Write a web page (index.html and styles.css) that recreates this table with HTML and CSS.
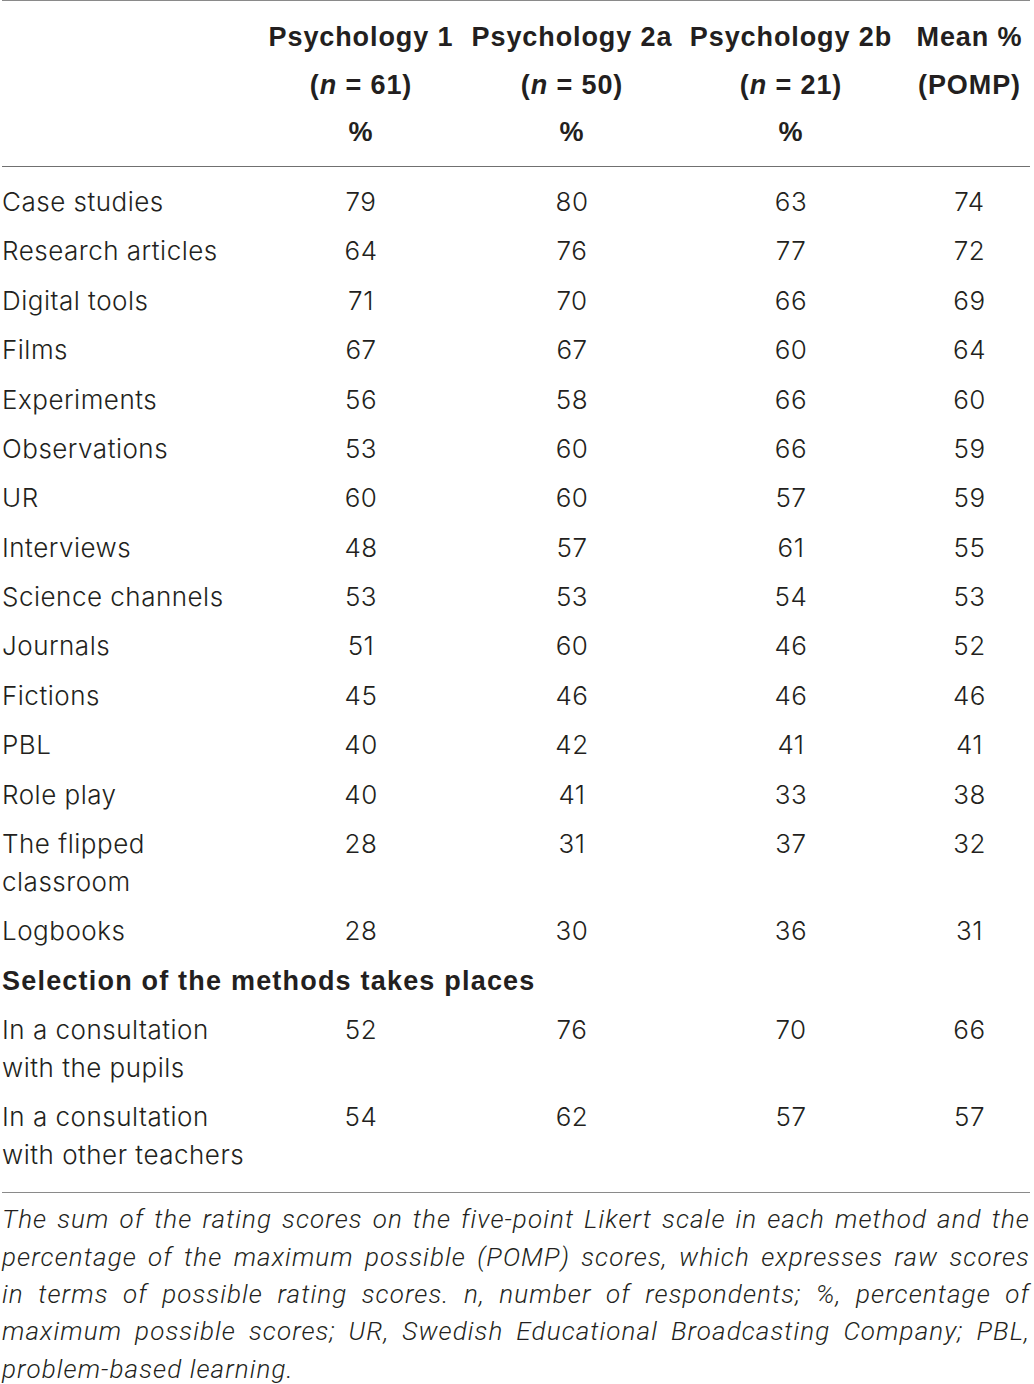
FILE: index.html
```html
<!DOCTYPE html>
<html lang="en">
<head>
<meta charset="utf-8">
<title>Table</title>
<link rel="stylesheet" href="styles.css">
</head>
<body>
<div class="wrap">
  <table class="data">
    <colgroup>
      <col class="c-label">
      <col class="c-p1">
      <col class="c-p2a">
      <col class="c-p2b">
      <col class="c-mean">
    </colgroup>
    <thead>
      <tr>
        <th></th>
        <th><span class="hl">Psychology 1</span><span class="hl">(<i>n</i> = 61)</span><span class="hl">%</span></th>
        <th><span class="hl">Psychology 2a</span><span class="hl">(<i>n</i> = 50)</span><span class="hl">%</span></th>
        <th><span class="hl">Psychology 2b</span><span class="hl">(<i>n</i> = 21)</span><span class="hl">%</span></th>
        <th><span class="hl">Mean %</span><span class="hl">(POMP)</span></th>
      </tr>
    </thead>
    <tbody>
      <tr class="first"><td>Case studies</td><td>79</td><td>80</td><td>63</td><td>74</td></tr>
      <tr><td>Research articles</td><td>64</td><td>76</td><td>77</td><td>72</td></tr>
      <tr><td>Digital tools</td><td>71</td><td>70</td><td>66</td><td>69</td></tr>
      <tr><td>Films</td><td>67</td><td>67</td><td>60</td><td>64</td></tr>
      <tr><td>Experiments</td><td>56</td><td>58</td><td>66</td><td>60</td></tr>
      <tr><td>Observations</td><td>53</td><td>60</td><td>66</td><td>59</td></tr>
      <tr><td>UR</td><td>60</td><td>60</td><td>57</td><td>59</td></tr>
      <tr><td>Interviews</td><td>48</td><td>57</td><td>61</td><td>55</td></tr>
      <tr><td>Science channels</td><td>53</td><td>53</td><td>54</td><td>53</td></tr>
      <tr><td>Journals</td><td>51</td><td>60</td><td>46</td><td>52</td></tr>
      <tr><td>Fictions</td><td>45</td><td>46</td><td>46</td><td>46</td></tr>
      <tr><td>PBL</td><td>40</td><td>42</td><td>41</td><td>41</td></tr>
      <tr><td>Role play</td><td>40</td><td>41</td><td>33</td><td>38</td></tr>
      <tr><td>The flipped classroom</td><td>28</td><td>31</td><td>37</td><td>32</td></tr>
      <tr><td>Logbooks</td><td>28</td><td>30</td><td>36</td><td>31</td></tr>
      <tr class="section"><td colspan="5">Selection of the methods takes places</td></tr>
      <tr><td>In a consultation with the pupils</td><td>52</td><td>76</td><td>70</td><td>66</td></tr>
      <tr class="last"><td>In a consultation with other teachers</td><td>54</td><td>62</td><td>57</td><td>57</td></tr>
    </tbody>
  </table>
  <p class="note"><span class="ln">The sum of the rating scores on the five-point Likert scale in each method and the</span> <span class="ln">percentage of the maximum possible (POMP) scores, which expresses raw scores</span> <span class="ln">in terms of possible rating scores. n, number of respondents; %, percentage of</span> <span class="ln">maximum possible scores; UR, Swedish Educational Broadcasting Company; PBL,</span> <span class="ln end">problem-based learning.</span></p>
</div>
</body>
</html>
```
FILE: styles.css
```css
html, body {
  margin: 0;
  padding: 0;
  background: #ffffff;
}

body {
  color: #231f20;
  font-family: "Inter", "Liberation Sans", sans-serif;
  font-weight: 300;
  font-size: 26px;
}

.wrap {
  width: 1028px;
  margin-left: 2px;
}

.data {
  width: 1028px;
  table-layout: fixed;
  border-collapse: collapse;
  border-top: 1px solid #8a8a8a;
}

.c-label { width: 249px; }
.c-p1 { width: 220px; }
.c-p2a { width: 202px; }
.c-p2b { width: 236px; }
.c-mean { width: 121px; }

.data th {
  font-family: "Liberation Sans", sans-serif;
  font-weight: 700;
  font-size: 27px;
  letter-spacing: 0.9px;
  line-height: 47.5px;
  text-align: center;
  vertical-align: top;
  white-space: nowrap;
  padding: 13px 0 9px;
  border-bottom: 1px solid #707070;
}

.hl {
  display: block;
}

.data td {
  padding: 5.7px 0;
  line-height: 38px;
  letter-spacing: 0.5px;
  vertical-align: top;
  text-align: center;
}

.data td:first-child {
  text-align: left;
}

.data tr.first td {
  padding-top: 16.5px;
}

.data tr.last td {
  padding-bottom: 18px;
}

.data tr.section td {
  font-family: "Liberation Sans", sans-serif;
  font-weight: 700;
  font-size: 27px;
  letter-spacing: 1.2px;
  white-space: nowrap;
}

.note {
  margin: 0;
  border-top: 1px solid #8a8a8a;
  padding-top: 8px;
  font-family: "Roboto", "Liberation Sans", sans-serif;
  font-style: italic;
  font-weight: 300;
  font-size: 26px;
  letter-spacing: 1.1px;
  line-height: 37.3px;
}

.note .ln {
  display: block;
  text-align: justify;
  text-align-last: justify;
}

.note .ln.end {
  text-align-last: left;
}
```
